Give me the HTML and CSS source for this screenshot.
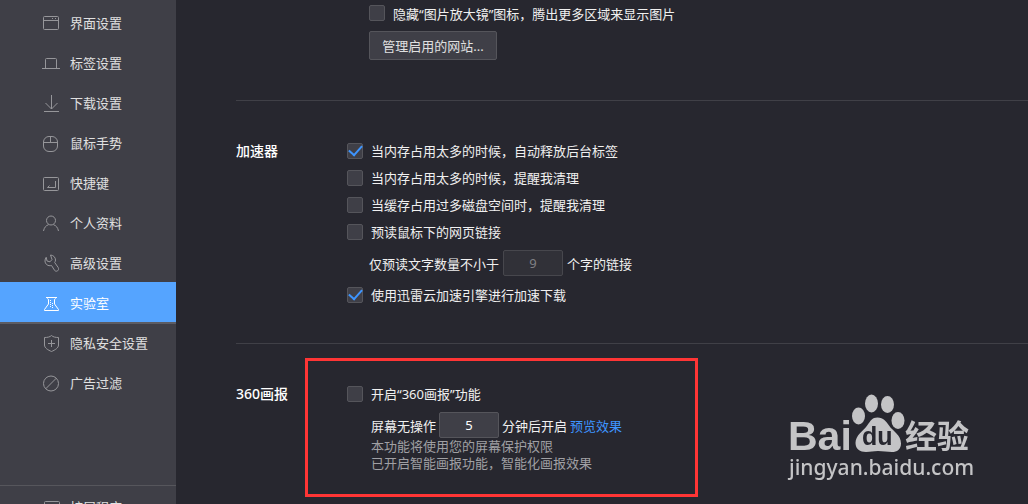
FILE: index.html
```html
<!DOCTYPE html>
<html lang="zh-CN">
<head>
<meta charset="UTF-8">
<meta name="viewport" content="width=device-width, initial-scale=1">
<title>实验室</title>
<link rel="stylesheet" href="styles.css">
</head>
<body>

<aside class="sidebar">
    <nav class="menu">
        <a href="#" class="item">
            <svg class="icon" viewBox="0 0 18 18"><rect x="1.5" y="2.5" width="15" height="13" rx="1"/><path d="M1.5 6.5h15M10 4.5h1M13 4.5h1"/></svg>
            界面设置
        </a>
        <a href="#" class="item">
            <svg class="icon" viewBox="0 0 18 18"><path d="M0 14.5h18M3.5 14.5v-9q0-1 1-1h9q1 0 1 1v9"/></svg>
            标签设置
        </a>
        <a href="#" class="item">
            <svg class="icon" viewBox="0 0 18 18"><path d="M9.5 1v14M3.5 9l6 6 6-6M2 17.5h15"/></svg>
            下载设置
        </a>
        <a href="#" class="item">
            <svg class="icon" viewBox="0 0 18 18"><rect x="1.5" y="2.5" width="14" height="15" rx="5.5"/><path d="M1.5 8.5h14M8.5 2.5v6"/></svg>
            鼠标手势
        </a>
        <a href="#" class="item">
            <svg class="icon" viewBox="0 0 18 18"><rect x="1.5" y="3.5" width="15" height="13" rx="1"/><path d="M13.500 7v6.500h-8M7.500 11.500l-2 2"/></svg>
            快捷键
        </a>
        <a href="#" class="item">
            <svg class="icon" viewBox="0 0 18 18"><circle cx="9" cy="6.500" r="4.500"/><path d="M1.500 17c.7-3.500 2.500-5.500 5-6.300M16.500 17c-.7-3.500-2.500-5.500-5-6.300"/></svg>
            个人资料
        </a>
        <a href="#" class="item">
            <svg class="icon" viewBox="0 0 18 18"><path d="M8.500 1c3 .2 5 2.500 5 5 0 1-.3 1.700-.8 2.500l3.500 5c1.500 2.500-1.500 5-3.500 3L9.500 11.500C6 12.500 3 10 3 7c0-1.500.4-2.700 1.200-3.700l.8 3.700 3 .8 2-2.300z"/></svg>
            高级设置
        </a>
        <a href="#" class="item active">
            <svg class="icon" viewBox="0 0 18 18"><path d="M4 3.500h11M5 3.500c0 1 1.500 1 1.500 2.500v4l-4 5.500v1h14v-1l-4-5.500V6c0-1.500 1.500-1.500 1.500-2.500"/><path stroke-dasharray="1 1" d="M8.500 6v7M10.500 9v5"/></svg>
            实验室
        </a>
        <a href="#" class="item">
            <svg class="icon" viewBox="0 0 18 18"><path d="M9.500 1.500c-1.500 1.500-4 2-7 2V11c0 3 3.500 5 7 6.500 3.500-1.500 7-3.500 7-6.500V3.500c-3 0-5.500-.5-7-2zM6 9.500h7M9.500 6v7"/></svg>
            隐私安全设置
        </a>
        <a href="#" class="item">
            <svg class="icon" viewBox="0 0 18 18"><circle cx="9" cy="9.500" r="7.500"/><path d="M3.700 14.800L14.300 4.200"/></svg>
            广告过滤
        </a>
    </nav>
    <nav class="menu menu-more">
        <a href="#" class="item">
            <svg class="icon" viewBox="0 0 18 18"><rect x="2.5" y="3.5" width="15" height="13" rx="1"/></svg>
            扩展程序
        </a>
    </nav>
</aside>

<main class="content">
    <section class="section">
        <div class="options">
            <label class="row nested"><input type="checkbox" class="check">隐藏“图片放大镜”图标，腾出更多区域来显示图片</label>
            <button type="button" class="btn nested">管理启用的网站...</button>
        </div>
    </section>

    <section class="section">
        <h2 class="title">加速器</h2>
        <div class="options">
            <label class="row"><input type="checkbox" class="check" checked>当内存占用太多的时候，自动释放后台标签</label>
            <label class="row"><input type="checkbox" class="check">当内存占用太多的时候，提醒我清理</label>
            <label class="row"><input type="checkbox" class="check">当缓存占用过多磁盘空间时，提醒我清理</label>
            <label class="row"><input type="checkbox" class="check">预读鼠标下的网页链接</label>
            <div class="row-input nested">
                <label for="words">仅预读文字数量不小于</label>
                <input type="text" id="words" class="num" value="9" disabled>
                <span>个字的链接</span>
            </div>
            <label class="row"><input type="checkbox" class="check" checked>使用迅雷云加速引擎进行加速下载</label>
        </div>
    </section>

    <section class="section">
        <h2 class="title">360画报</h2>
        <div class="options">
            <label class="row"><input type="checkbox" class="check">开启“360画报”功能</label>
            <div class="detail">
                <div class="row-input">
                    <label for="idle">屏幕无操作</label>
                    <input type="text" id="idle" class="num" value="5">
                    <span>分钟后开启</span>
                    <a href="#" class="link">预览效果</a>
                </div>
                <p class="hint">本功能将使用您的屏幕保护权限</p>
                <p class="hint">已开启智能画报功能，智能化画报效果</p>
            </div>
            <div class="highlight"></div>
        </div>
    </section>
</main>

<svg class="watermark" width="200" height="100" viewBox="0 0 200 100">
    <text x="4" y="60" class="wm-bai">Bai</text>
    <ellipse cx="74.500" cy="26" rx="6.500" ry="8.500"/>
    <ellipse cx="87.500" cy="13.500" rx="6.500" ry="9"/>
    <ellipse cx="103.500" cy="14.500" rx="6.500" ry="8.500"/>
    <ellipse cx="114" cy="30.500" rx="6.500" ry="8.500"/>
    <path d="M93.500 27.500c6 0 8.500 4 11.500 8 4 6 12 9 12 18 0 6-4 8.500-9 8.500-5 0-9-1-14-1s-7 1-12 1c-6 0-10.500-3-10.500-9 0-8 8-12 12-18 3-4 4.500-7.500 10-7.500z"/>
    <text x="78" y="55" class="wm-du">du</text>
    <text x="121" y="58" class="wm-cn">经验</text>
    <text x="5" y="85" class="wm-url">jingyan.baidu.com</text>
</svg>

</body>
</html>
```
FILE: styles.css
```css
* {
    box-sizing: border-box;
}
body {
    margin: 0;
    height: 100vh;
    display: flex;
    overflow: hidden;
    font-family: "Noto Sans", "Noto Sans CJK SC", sans-serif;
    font-size: 13px;
    color: #f0f0f0;
    background: #27272f;
}

/* Sidebar */
.sidebar {
    flex: 0 0 176px;
    padding-top: 2px;
    overflow: hidden;
    background: #3f3f47;
}
.item {
    display: flex;
    align-items: center;
    gap: 10px;
    height: 40px;
    padding-left: 42px;
    color: #e0e0e0;
    text-decoration: none;
}
.active {
    color: #fff;
    background: #55a4ff;
    box-shadow: 0 2px 0 #5c5c63;
}
.icon {
    width: 18px;
    height: 18px;
    margin-top: 2px;
    fill: none;
    stroke: #96969a;
}
.active .icon {
    stroke: #fff;
}
.menu-more {
    margin-top: 83px;
    border-top: 1px solid #56565c;
}

/* Settings */
.content {
    flex: 1;
    padding-left: 60px;
}
.section {
    display: flex;
    padding: 36px 0 35px;
}
.section:first-child {
    padding: 0 0 40px;
}
.section + .section {
    border-top: 1px solid #404047;
}
.title {
    width: 111px;
    margin: 0;
    font-size: 14px;
    font-weight: 500;
    line-height: 27px;
    color: #fff;
}
.options {
    position: relative;
    flex: 1;
}
.section:first-child .options {
    margin-left: 111px;
}
.row {
    display: flex;
    align-items: center;
    gap: 8px;
    height: 27px;
}
.section:first-child .row {
    height: 26px;
}
.nested {
    margin-left: 22px;
}
.check {
    display: grid;
    place-items: center;
    appearance: none;
    width: 16px;
    height: 16px;
    margin: 0;
    border: 1px solid #55555b;
    border-radius: 2px;
    background: #3f3f47;
}
.check:checked::after {
    content: "";
    width: 11px;
    height: 6px;
    margin-bottom: 4px;
    border: solid #3e95ff;
    border-width: 0 0 2px 2px;
    transform: rotate(-48deg);
}
.btn {
    display: block;
    width: 128px;
    height: 29px;
    margin-top: 5px;
    padding: 0;
    border: 1px solid #55555b;
    border-radius: 2px;
    font: inherit;
    color: #e0e0e0;
    background: #3f3f47;
}
.row-input {
    display: flex;
    align-items: center;
    gap: 4px;
    height: 26px;
    margin-top: 5px;
}
.row-input + .row {
    margin-top: 5px;
}
.num {
    width: 60px;
    height: 26px;
    padding: 0;
    border: 1px solid #55555b;
    border-radius: 2px;
    font: inherit;
    text-align: center;
    color: #fff;
    background: #3f3f47;
}
.num:disabled {
    border-color: #47474d;
    color: #808084;
    background: #313138;
}
.detail {
    margin-left: 24px;
}
.detail .row-input {
    gap: 3px;
}
.link {
    color: #3e95ff;
    text-decoration: none;
}
.hint {
    margin: 0;
    line-height: 17px;
    color: #a0a0a4;
}

/* Red frame over the 360 options */
.highlight {
    position: absolute;
    top: -22px;
    left: -42px;
    width: 393px;
    height: 139px;
    border: 3px solid #ff3535;
    pointer-events: none;
}

/* Watermark */
.watermark {
    position: fixed;
    right: 44px;
    bottom: 14px;
    fill: #c4c4c6;
}
.wm-bai {
    font: bold 41px "Liberation Sans", sans-serif;
}
.wm-du {
    font: bold 25px "Liberation Sans", sans-serif;
    fill: #27272f;
}
.wm-cn {
    font: bold 32px "Noto Sans CJK SC", sans-serif;
}
.wm-url {
    font: 500 21px "Noto Sans", sans-serif;
}
```
